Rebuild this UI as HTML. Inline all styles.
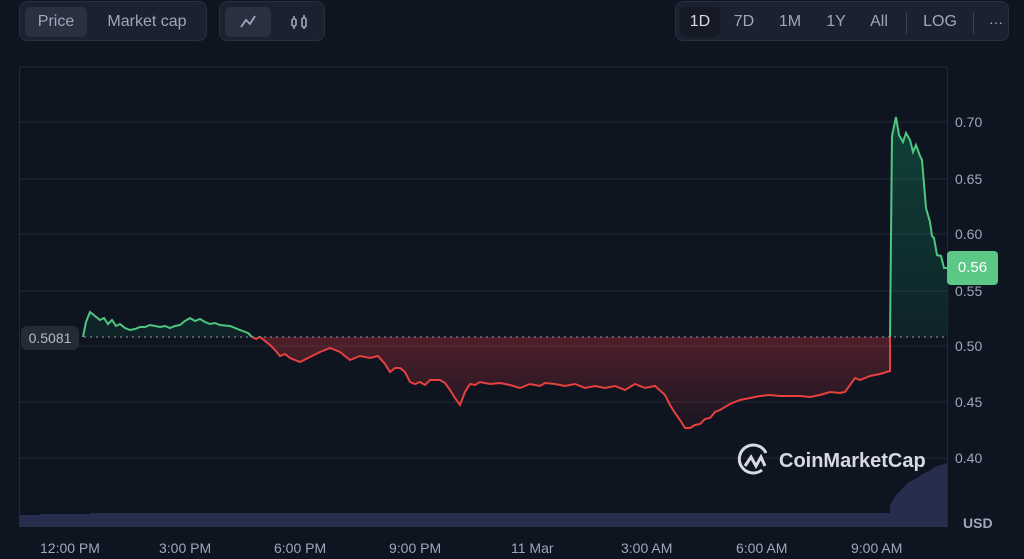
<!DOCTYPE html>
<html><head><style>
body{margin:0;width:1024px;height:559px;background:#0e1420;font-family:"Liberation Sans",sans-serif;overflow:hidden;position:relative}
.grp{position:absolute;top:1px;height:40px;border:1px solid #2a2f3d;background:#1c2130;border-radius:8px;box-sizing:border-box}
.btn{position:absolute;top:5px;height:30px;line-height:30px;color:#a1a7bb;font-size:16px;text-align:center;border-radius:6px}
.on{background:#2b3040}
.ax{position:absolute;color:#a1a7bb;font-size:14px}
</style></head><body>
<div class="grp" style="left:19px;width:188px">
 <div class="btn on" style="left:5px;width:62px">Price</div>
 <div class="btn" style="left:78px;width:98px">Market cap</div>
</div>
<div class="grp" style="left:219px;width:106px">
 <div class="btn on" style="left:5px;width:46px"><svg width="20" height="20" style="margin-top:5px" viewBox="0 0 20 20"><path d="M3 15l5-7 4 4 5-8" stroke="#a1a7bb" stroke-width="1.8" fill="none"/></svg></div>
 <div class="btn" style="left:56px;width:46px"><svg width="20" height="20" style="margin-top:5px" viewBox="0 0 20 20" stroke="#a1a7bb" stroke-width="1.6" fill="none"><rect x="3" y="7" width="4" height="7" rx="1.5"/><path d="M5 4v3M5 14v3M15 3v3M15 15v2"/><rect x="13" y="6" width="4" height="9" rx="1.5"/></svg></div>
</div>
<div class="grp" style="left:675px;width:334px">
 <div class="btn on" style="left:4px;width:40px;background:#151a26;color:#d6d9e4">1D</div>
 <div class="btn" style="left:48px;width:40px">7D</div>
 <div class="btn" style="left:94px;width:40px">1M</div>
 <div class="btn" style="left:140px;width:40px">1Y</div>
 <div class="btn" style="left:183px;width:40px">All</div>
 <div style="position:absolute;left:230px;top:10px;width:1px;height:22px;background:#3d4356"></div>
 <div class="btn" style="left:240px;width:48px">LOG</div>
 <div style="position:absolute;left:297px;top:10px;width:1px;height:22px;background:#3d4356"></div>
 <div class="btn" style="left:306px;width:28px;font-size:14px">···</div>
</div>
<svg width="1024" height="559" style="position:absolute;left:0;top:0">
<defs>
 <clipPath id="up"><rect x="0" y="0" width="1024" height="337"/></clipPath>
 <clipPath id="dn"><rect x="0" y="337" width="1024" height="200"/></clipPath>
 <linearGradient id="gg" x1="0" y1="0" x2="0" y2="1"><stop offset="0" stop-color="#16c784" stop-opacity=".25"/><stop offset="1" stop-color="#16c784" stop-opacity=".08"/></linearGradient>
 <linearGradient id="rg" x1="0" y1="0" x2="0" y2="1"><stop offset="0" stop-color="#ea3943" stop-opacity=".3"/><stop offset="1" stop-color="#ea3943" stop-opacity=".05"/></linearGradient>
 <path id="ln" d="M83,337 L86,322 L90,312 L95,316 L100,320 L104,318 L108,324 L112,320 L116,326 L120,324 L125,328 L130,330 L135,329 L140,327 L145,327 L150,325 L155,326 L160,327 L165,326 L170,328 L175,326 L180,325 L185,321 L190,318 L195,321 L200,319 L205,322 L210,324 L215,323 L220,325 L230,326 L240,330 L248,333 L252,337 L256,339 L260,337 L265,341 L270,345 L275,350 L280,356 L285,354 L290,358 L300,362 L310,357 L320,352 L330,348 L340,352 L345,356 L350,360 L360,356 L370,358 L378,356 L385,364 L390,372 L395,368 L400,368 L405,372 L410,382 L415,384 L420,382 L425,385 L430,380 L440,380 L445,383 L450,390 L455,398 L460,405 L465,392 L470,384 L475,385 L480,382 L490,384 L500,383 L510,385 L520,388 L530,384 L540,386 L545,383 L555,384 L565,386 L575,384 L585,388 L595,386 L605,388 L615,386 L625,390 L635,384 L645,388 L655,386 L665,395 L670,405 L675,413 L680,420 L685,428 L690,428 L695,425 L700,424 L705,419 L710,418 L715,412 L720,410 L730,404 L740,400 L750,398 L760,396 L770,395 L780,396 L790,396 L800,396 L810,397 L820,395 L830,392 L840,393 L845,392 L850,385 L855,378 L860,380 L865,378 L870,376 L880,374 L890,371 L890,339 L892,136 L896,117 L899,135 L903,142 L906,133 L910,140 L913,152 L916,145 L920,156 L922,160 L926,208 L930,222 L932,236 L934,238 L937,255 L941,256 L944,268 L947,268"/>
</defs>
<g stroke="#232836" stroke-width="1">
 <line x1="19" y1="67" x2="947" y2="67"/><line x1="19" y1="122" x2="947" y2="122"/><line x1="19" y1="179" x2="947" y2="179"/><line x1="19" y1="234" x2="947" y2="234"/><line x1="19" y1="291" x2="947" y2="291"/><line x1="19" y1="346" x2="947" y2="346"/><line x1="19" y1="402" x2="947" y2="402"/><line x1="19" y1="458" x2="947" y2="458"/>
 <line x1="19.5" y1="67" x2="19.5" y2="527"/><line x1="947.5" y1="67" x2="947.5" y2="527"/>
</g>
<polygon points="19,527 19,515 40,515 40,514 90,514 90,513 890,513 890,505 893,500 897,494 901,490 905,486 909,482 913,480 917,478 921,475 925,473 929,471 933,468 937,466 941,465 947,463 947,527" fill="#262d4d"/>
<line x1="84" y1="337" x2="947" y2="337" stroke="#7d8291" stroke-dasharray="2 4" stroke-width="1.2"/>
<g clip-path="url(#up)"><path d="M83,337 L86,322 L90,312 L95,316 L100,320 L104,318 L108,324 L112,320 L116,326 L120,324 L125,328 L130,330 L135,329 L140,327 L145,327 L150,325 L155,326 L160,327 L165,326 L170,328 L175,326 L180,325 L185,321 L190,318 L195,321 L200,319 L205,322 L210,324 L215,323 L220,325 L230,326 L240,330 L248,333 L252,337 L890,337 L890,339 L892,136 L896,117 L899,135 L903,142 L906,133 L910,140 L913,152 L916,145 L920,156 L922,160 L926,208 L930,222 L932,236 L934,238 L937,255 L941,256 L944,268 L947,268 L947,337 Z" fill="url(#gg)"/></g>
<g clip-path="url(#dn)"><path d="M252,337 L256,339 L260,337 L265,341 L270,345 L275,350 L280,356 L285,354 L290,358 L300,362 L310,357 L320,352 L330,348 L340,352 L345,356 L350,360 L360,356 L370,358 L378,356 L385,364 L390,372 L395,368 L400,368 L405,372 L410,382 L415,384 L420,382 L425,385 L430,380 L440,380 L445,383 L450,390 L455,398 L460,405 L465,392 L470,384 L475,385 L480,382 L490,384 L500,383 L510,385 L520,388 L530,384 L540,386 L545,383 L555,384 L565,386 L575,384 L585,388 L595,386 L605,388 L615,386 L625,390 L635,384 L645,388 L655,386 L665,395 L670,405 L675,413 L680,420 L685,428 L690,428 L695,425 L700,424 L705,419 L710,418 L715,412 L720,410 L730,404 L740,400 L750,398 L760,396 L770,395 L780,396 L790,396 L800,396 L810,397 L820,395 L830,392 L840,393 L845,392 L850,385 L855,378 L860,380 L865,378 L870,376 L880,374 L890,371 L890,337 Z" fill="url(#rg)"/></g>
<use href="#ln" fill="none" stroke="#4fc67f" stroke-width="2" clip-path="url(#up)"/>
<use href="#ln" fill="none" stroke="#e5413f" stroke-width="2" clip-path="url(#dn)"/>
<g fill="none" stroke="#d7dae3" stroke-width="3"><path d="M762 470 A14 14 0 1 1 766 453"/><path d="M745 466 L751 457 L756 466 L761 457 L765 466"/></g>
</svg>
<div style="position:absolute;left:779px;top:450px;color:#d7dae3;font-size:20px;font-weight:bold">CoinMarketCap</div>
<div style="position:absolute;left:21px;top:326px;width:58px;height:24px;background:#252a37;border-radius:6px;color:#b5bac9;font-size:14px;line-height:24px;text-align:center">0.5081</div>
<div class="ax" style="left:955px;top:114px">0.70</div>
<div class="ax" style="left:955px;top:171px">0.65</div>
<div class="ax" style="left:955px;top:226px">0.60</div>
<div class="ax" style="left:955px;top:283px">0.55</div>
<div class="ax" style="left:955px;top:338px">0.50</div>
<div class="ax" style="left:955px;top:394px">0.45</div>
<div class="ax" style="left:955px;top:450px">0.40</div>
<div style="position:absolute;left:947px;top:251px;width:51px;height:34px;background:#5cc885;border-radius:4px;color:#fff;font-size:15px;line-height:34px;text-align:center">0.56</div>
<div class="ax" style="left:963px;top:515px;font-weight:bold">USD</div>
<div class="ax" style="left:40px;top:540px">12:00 PM</div>
<div class="ax" style="left:159px;top:540px">3:00 PM</div>
<div class="ax" style="left:274px;top:540px">6:00 PM</div>
<div class="ax" style="left:389px;top:540px">9:00 PM</div>
<div class="ax" style="left:511px;top:540px">11 Mar</div>
<div class="ax" style="left:621px;top:540px">3:00 AM</div>
<div class="ax" style="left:736px;top:540px">6:00 AM</div>
<div class="ax" style="left:851px;top:540px">9:00 AM</div>
</body></html>
